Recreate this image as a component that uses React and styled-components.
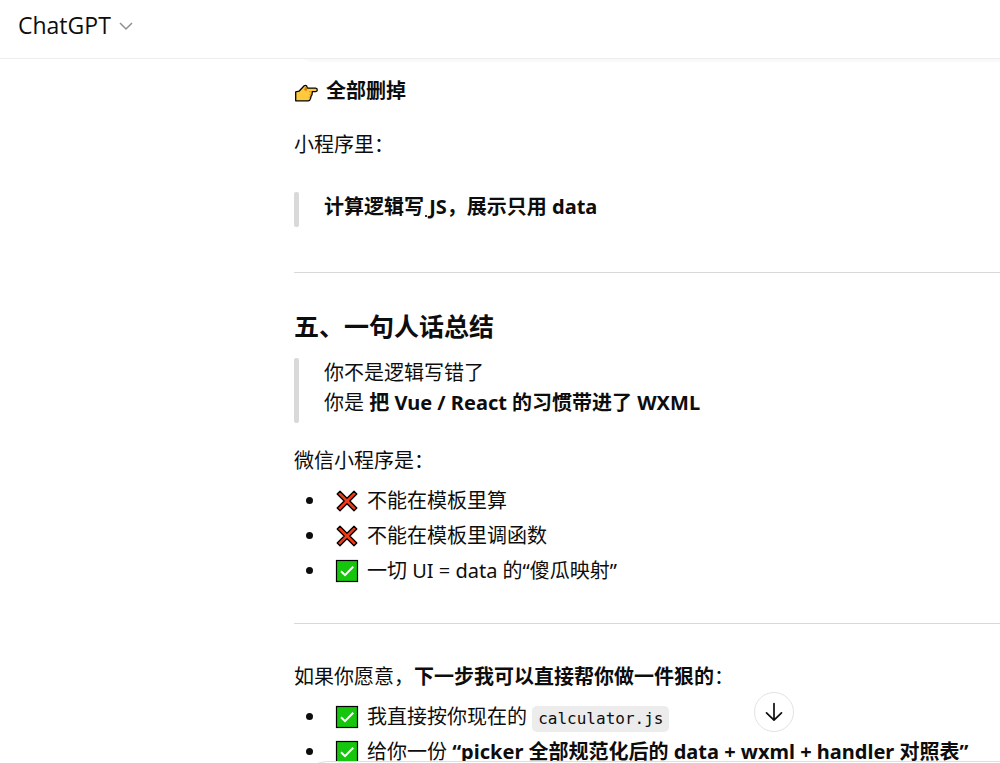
import React from "react";
import styled, { createGlobalStyle } from "styled-components";

const GlobalStyle = createGlobalStyle`
  *,
  *::before,
  *::after {
    box-sizing: border-box;
  }
  html,
  body,
  #root {
    height: 100%;
    margin: 0;
  }
  body {
    background: #fff;
    color: #0d0d0d;
    font-family: "Noto Sans", "Noto Sans CJK SC", sans-serif;
    font-size: 20px;
    line-height: 35px;
  }
`;

const HandIcon = () => (
  <Emoji viewBox="0 -2 24 24" role="img" aria-label="point right">
    <path
      d="M1.7 10.8 L5 10.2 L10.2 4.8 Q11.6 3.8 12.6 4.9 L13.4 7.2 H21.6 Q23.3 7.4 23.3 9 Q23.3 10.4 21.6 10.6 H18.3 L18 13.6 L17 15.4 L16.6 17.4 Q16 19.8 14.2 19.8 H1.7 Z"
      fill="#ffc83d"
      stroke="#000"
      strokeWidth="1.3"
      strokeLinejoin="round"
    />
    <path d="M10 9 L11.6 5.6 L13.4 7.2 L12.5 10 Z" fill="#d67d00" />
    <path
      d="M15 10.8 H18 M15.4 13.6 H17.4 M14.6 16.4 H16.2"
      fill="none"
      stroke="#d67d00"
      strokeWidth="0.8"
    />
  </Emoji>
);

const CrossIcon = () => (
  <Emoji viewBox="0 0 24 24" role="img" aria-label="no">
    <path
      d="M5 2.2 L12 9.2 L19 2.2 L21.8 5 L14.8 12 L21.8 19 L19 21.8 L12 14.8 L5 21.8 L2.2 19 L9.2 12 L2.2 5 Z"
      fill="#f03a17"
      stroke="#000"
      strokeWidth="1.3"
      strokeLinejoin="round"
    />
  </Emoji>
);

const CheckIcon = () => (
  <Emoji viewBox="0 0 24 24" role="img" aria-label="yes">
    <rect
      x="1.5"
      y="1.5"
      width="21"
      height="21"
      fill="#16c60c"
      stroke="#000"
      strokeWidth="1.2"
    />
    <path
      d="M6 12.2 L10 16.2 L18.2 7.8"
      fill="none"
      stroke="#fff"
      strokeWidth="2"
    />
  </Emoji>
);

const App = () => {
  return (
    <Page>
      <GlobalStyle />
      <Header>
        <ModelButton type="button">
          ChatGPT
          <Chevron viewBox="0 0 16 16" aria-hidden="true">
            <path d="M2 6 L8 12 L14 6" />
          </Chevron>
        </ModelButton>
      </Header>
      <Thread>
        <CodeBlockEnd />
        <Paragraph>
          <HandIcon />
          <strong>全部删掉</strong>
        </Paragraph>
        <Paragraph>小程序里：</Paragraph>
        <Quote>
          <strong>
            计算逻辑写<Speck> </Speck>JS，展示只用 data
          </strong>
        </Quote>
        <Divider />
        <Title>五、一句人话总结</Title>
        <Quote $tight>
          你不是逻辑写错了
          <br />
          你是 <strong>把 Vue / React 的习惯带进了 WXML</strong>
        </Quote>
        <Lead>微信小程序是：</Lead>
        <List>
          <li>
            <CrossIcon />
            不能在模板里算
          </li>
          <li>
            <CrossIcon />
            不能在模板里调函数
          </li>
          <li>
            <CheckIcon />
            一切 UI = data 的“傻瓜映射”
          </li>
        </List>
        <Divider />
        <Lead>
          如果你愿意，<strong>下一步我可以直接帮你做一件狠的</strong>：
        </Lead>
        <List>
          <li>
            <CheckIcon />
            我直接按你现在的 <Code>calculator.js</Code>
          </li>
          <li>
            <CheckIcon />
            给你一份{" "}
            <strong>“picker 全部规范化后的 data + wxml + handler 对照表”</strong>
          </li>
        </List>
      </Thread>
      <ScrollButton type="button" aria-label="Scroll to bottom">
        <svg viewBox="0 0 20 20" aria-hidden="true">
          <path d="M10 1.5 V18 M2.5 10.8 L10 18.2 L17.5 10.8" />
        </svg>
      </ScrollButton>
      <Composer />
    </Page>
  );
};

export default App;

const Page = styled.div`
  position: relative;
  display: flex;
  flex-direction: column;
  height: 100vh;
  overflow: hidden;
`;

const Header = styled.header`
  flex: none;
  display: flex;
  align-items: center;
  height: 59px;
  padding: 0 18px 8px;
  border-bottom: 1px solid #ededed;
`;

const ModelButton = styled.button`
  display: flex;
  align-items: center;
  gap: 7px;
  padding: 0;
  border: 0;
  background: none;
  color: #0d0d0d;
  font-family: "Open Sans", sans-serif;
  font-size: 23px;
  line-height: 35px;
`;

const Chevron = styled.svg`
  width: 16px;
  height: 16px;
  fill: none;
  stroke: #8f8f8f;
  stroke-width: 1.5;
`;

const Thread = styled.main`
  flex: 1;
  min-height: 0;
  overflow: hidden;
  padding-left: 294px;
  white-space: nowrap;

  strong {
    font-weight: 700;
  }
`;

const CodeBlockEnd = styled.div`
  height: 30px;
  margin: -27px 0 11px;
  border-radius: 0 0 0 20px;
  background: #f9f9f9;
`;

const Paragraph = styled.p`
  margin: 0 0 19px;
`;

const Lead = styled.p`
  margin: 0 0 5px;
`;

const Title = styled.h3`
  margin: 0 0 14px;
  font-size: 25px;
  line-height: 36px;
  font-weight: 700;
`;

const Quote = styled.blockquote`
  position: relative;
  margin: ${({ $tight }) => ($tight ? "0 0 20px" : "30px 0 45px")};
  padding: 0 0 5px 30px;
  line-height: 30px;

  &::before {
    content: "";
    position: absolute;
    inset: 0 auto 0 0;
    width: 5px;
    border-radius: 2px;
    background: #d9d9d9;
  }
`;

const Speck = styled.span`
  position: relative;

  &::after {
    content: "";
    position: absolute;
    left: 1px;
    bottom: 3px;
    width: 2px;
    height: 2px;
    background: #333;
  }
`;

const Divider = styled.hr`
  height: 1px;
  margin: 0 0 35px;
  border: 0;
  background: #d9d9d9;
`;

const List = styled.ul`
  margin: 0 0 35px;
  padding-left: 33px;

  li {
    height: 35px;
    padding-left: 8px;
  }
`;

const Emoji = styled.svg`
  width: 24px;
  height: 24px;
  margin-right: 8px;
  vertical-align: -5px;
`;

const Code = styled.code`
  padding: 3px 6px 4px;
  border-radius: 5px;
  background: #ececec;
  font-family: "DejaVu Sans Mono", monospace;
  font-size: 16px;
  line-height: 20px;
`;

const ScrollButton = styled.button`
  position: absolute;
  right: 206px;
  bottom: 31px;
  display: flex;
  align-items: center;
  justify-content: center;
  width: 40px;
  height: 40px;
  padding: 0;
  border: 1px solid #e3e3e3;
  border-radius: 50%;
  background: #fff;

  svg {
    width: 20px;
    height: 20px;
    fill: none;
    stroke: #0d0d0d;
    stroke-width: 1.7;
    stroke-linecap: round;
    stroke-linejoin: round;
  }
`;

const Composer = styled.div`
  position: absolute;
  left: 294px;
  right: 0;
  bottom: -58px;
  height: 60px;
  border-top: 1px solid #dedede;
  border-radius: 35px 0 0 0;
  background: #fff;
`;
